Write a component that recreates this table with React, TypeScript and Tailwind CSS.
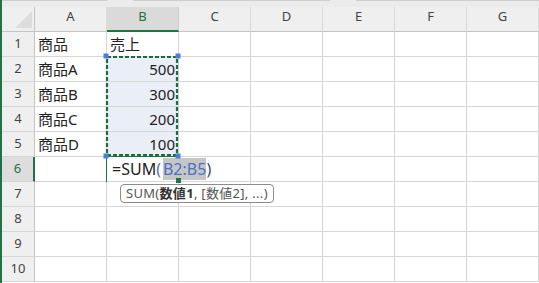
import React from 'react';

const COLS = ['A', 'B', 'C', 'D', 'E', 'F', 'G'];
const ROWS = [1, 2, 3, 4, 5, 6, 7, 8, 9, 10];

const values: Record<string, string> = {
  A1: '商品',
  B1: '売上',
  A2: '商品A',
  B2: '500',
  A3: '商品B',
  B3: '300',
  A4: '商品C',
  B4: '200',
  A5: '商品D',
  B5: '100',
};

const inRange = (col: string, row: number) => col === 'B' && row >= 2 && row <= 5;

function FormulaEdit() {
  return (
    <div className="flex h-full items-stretch whitespace-nowrap pl-[2px] text-[16px] text-[#222]">
      <span className="self-center">=SUM</span>
      <span className="self-center text-[#5d6f93]">(</span>
      <span className="my-[1px] ml-[2px] flex items-center bg-[#c6c6c6] text-[#4a72c4]">B2:B5</span>
      <span className="my-[1px] w-px bg-black" />
      <span className="self-center text-[#3b4a6b]">)</span>
    </div>
  );
}

function Cell({ col, row }: { col: string; row: number }) {
  const v = values[`${col}${row}`];
  const numeric = v !== undefined && /^\d+$/.test(v);
  const editing = col === 'B' && row === 6;
  return (
    <div
      className={
        'border-b border-[#d6d6d6] px-[3px] ' +
        (editing ? 'border-r border-r-transparent px-0 ' : 'border-r ') +
        (inRange(col, row) ? 'bg-[#e9eef7] ' : 'bg-white ') +
        (editing ? 'relative z-10 bg-transparent' : '')
      }
    >
      {editing ? (
        <FormulaEdit />
      ) : (
        v && (
          <div
            className={
              'flex h-full items-center text-[15px] text-[#222] ' + (numeric ? 'justify-end' : 'justify-start')
            }
          >
            {v}
          </div>
        )
      )}
    </div>
  );
}

export default function App() {
  return (
    <div className="h-[283px] w-[539px] overflow-hidden border-l-2 border-[#217346] bg-white font-['Noto_Sans','Noto_Sans_CJK_JP',sans-serif]">
      {/* strip under the formula bar */}
      <div className="flex h-[7px] flex-col bg-[#ebebeb]">
        <div className="flex h-px gap-[26px]">
          <div className="w-[105px] bg-[#cdcdcd]" />
          <div className="w-[197px] bg-[#cdcdcd]" />
          <div className="flex-1 bg-[#cdcdcd]" />
        </div>
      </div>

      <div className="relative">
        <div className="grid grid-cols-[33px_repeat(7,72px)] grid-rows-[25px_repeat(10,25px)]">
          {/* corner */}
          <div className="flex items-end justify-end border-r border-b border-[#c4c4c4] bg-[#efefef] pr-[2px] pb-[3px]">
            <svg width="17" height="17" viewBox="0 0 17 17">
              <path d="M17 0 L17 17 L0 17 Z" fill="#dcdcdc" />
            </svg>
          </div>

          {COLS.map((c) =>
            c === 'B' ? (
              <div
                key={c}
                className="flex items-center justify-center border-r border-b-2 border-r-[#cfcfcf] border-b-[#217346] bg-[#dadada] pb-[3px] text-[13px] text-[#217346]"
              >
                {c}
              </div>
            ) : (
              <div
                key={c}
                className="flex items-center justify-center border-r border-b border-r-[#dadada] border-b-[#c4c4c4] bg-[#efefef] pb-[4px] text-[13px] text-[#444]"
              >
                {c}
              </div>
            )
          )}

          {ROWS.map((r) => (
            <React.Fragment key={r}>
              {r === 6 ? (
                <div className="flex items-center justify-center border-r-2 border-b border-r-[#217346] border-b-[#d6d6d6] bg-[#dddddd] text-[13px] text-[#217346]">
                  {r}
                </div>
              ) : (
                <div className="flex items-center justify-center border-r border-b border-r-[#c4c4c4] border-b-[#d6d6d6] bg-[#efefef] text-[13px] text-[#444]">
                  {r}
                </div>
              )}
              {COLS.map((c) => (
                <Cell key={c} col={c} row={r} />
              ))}
            </React.Fragment>
          ))}
        </div>

        {/* copy range marquee and reference handles */}
        <svg className="pointer-events-none absolute inset-0 z-20" width="537" height="276">
          <rect x="105" y="50" width="70" height="98" fill="none" stroke="#1f6b40" strokeWidth="2.2" strokeDasharray="4 2" />
          <rect x="101.5" y="46.5" width="5" height="5" fill="#4a80d4" />
          <rect x="173.5" y="46.5" width="5" height="5" fill="#4a80d4" />
          <rect x="101.5" y="146.5" width="5" height="5" fill="#4a80d4" />
          <rect x="173.5" y="146.5" width="5" height="5" fill="#4a80d4" />
        </svg>

        {/* active cell B6 */}
        <div className="pointer-events-none absolute top-[149px] left-[104px] z-0 h-[26px] w-[74px] border-2 border-[#217346]" />
        <div className="absolute top-[171px] left-[174px] z-20 h-[5px] w-[5px] bg-[#217346]" />

        {/* argument hint */}
        <div className="absolute top-[177px] left-[118px] z-30 flex h-[19px] items-center rounded-[4px] border border-[#8c8c8c] bg-white px-[5px] text-[13px] tracking-[0.3px] whitespace-nowrap text-[#555]">
          SUM(<b className="font-bold text-[#333]">数値1</b>, [数値2], ...)
        </div>
      </div>
    </div>
  );
}
